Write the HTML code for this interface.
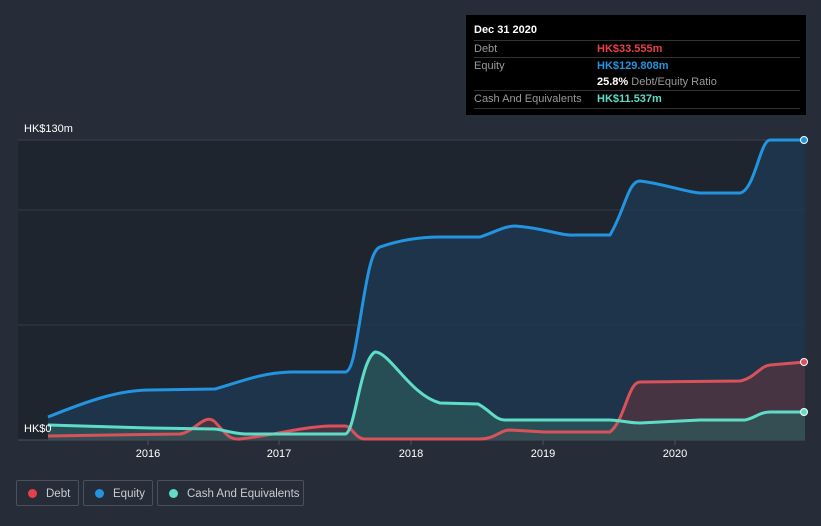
<!DOCTYPE html>
<html><head><style>
body{margin:0;width:821px;height:526px;background:#262d38;font-family:"Liberation Sans",sans-serif;overflow:hidden;position:relative}
.tt{position:absolute;left:466px;top:15px;width:340px;height:100px;background:#000;color:#fff;font-size:11px}
.row{position:absolute;left:8px;right:6px;height:17px;border-top:1px solid #333;line-height:17px;color:#999}
.lg{position:absolute;top:480px;height:26px;border:1px solid #4a515c;border-radius:2px;color:#c8ccd2;font-size:11.5px;line-height:26px;box-sizing:border-box;white-space:nowrap}
.lg i{display:inline-block;width:9px;height:9px;border-radius:50%;margin:0 9px 0 11px;vertical-align:-1px}
</style></head><body>
<svg width="821" height="526" style="position:absolute;left:0;top:0">
<rect x="18" y="140" width="787" height="300" fill="#1f252f"/>
<line x1="18" y1="140" x2="805" y2="140" stroke="#3a414c"/>
<line x1="18" y1="210" x2="805" y2="210" stroke="#333a45"/>
<line x1="18" y1="325" x2="805" y2="325" stroke="#333a45"/>
<line x1="18" y1="440" x2="805" y2="440" stroke="#4a515c"/>
<g stroke="#4a515c"><line x1="148" y1="440" x2="148" y2="445"/><line x1="279" y1="440" x2="279" y2="445"/><line x1="411" y1="440" x2="411" y2="445"/><line x1="543" y1="440" x2="543" y2="445"/><line x1="675" y1="440" x2="675" y2="445"/></g>
<path d="M48,417 C90,400 120,390 150,390 L215,389 C240,382 260,373 290,372 L345,372 C352,372 355,350 360,320 C368,270 372,250 380,247 C400,240 420,237 440,237 L480,237 C495,232 505,226 515,226 C545,228 560,236 575,235 L610,235 C625,210 628,181 640,181 C660,183 690,193 700,193 L740,193 C755,190 760,140 770,140 L805,140 L805,440 L48,440Z" fill="#1d3a55" opacity="0.75"/>
<path d="M48,436 L180,434 C195,432 205,412 215,422 C225,432 228,440 240,439 C270,436 300,427 330,426 L345,426 C352,426 355,439 365,439 L480,439 C495,439 500,430 510,430 L545,432 L610,432 C625,420 628,382 640,382 L740,381 C755,378 760,366 770,365 L805,362 L805,440 L48,440Z" fill="#5a3540" opacity="0.7"/>
<path d="M48,425 L150,428 L215,429 C225,430 230,433 245,434 L345,434 C355,434 360,360 375,352 C390,352 410,395 440,403 L478,404 C490,410 495,420 505,420 L610,420 C625,421 630,423 640,423 L700,420 L745,420 C755,418 760,412 770,412 L805,412 L805,440 L48,440Z" fill="#2d5a5a" opacity="0.7"/>
<g fill="none" stroke-width="3">
<path d="M48,417 C90,400 120,390 150,390 L215,389 C240,382 260,373 290,372 L345,372 C352,372 355,350 360,320 C368,270 372,250 380,247 C400,240 420,237 440,237 L480,237 C495,232 505,226 515,226 C545,228 560,236 575,235 L610,235 C625,210 628,181 640,181 C660,183 690,193 700,193 L740,193 C755,190 760,140 770,140 L805,140" stroke="#2394df"/>
<path d="M48,436 L180,434 C195,432 205,412 215,422 C225,432 228,440 240,439 C270,436 300,427 330,426 L345,426 C352,426 355,439 365,439 L480,439 C495,439 500,430 510,430 L545,432 L610,432 C625,420 628,382 640,382 L740,381 C755,378 760,366 770,365 L805,362" stroke="#d9515b"/>
<path d="M48,425 L150,428 L215,429 C225,430 230,433 245,434 L345,434 C355,434 360,360 375,352 C390,352 410,395 440,403 L478,404 C490,410 495,420 505,420 L610,420 C625,421 630,423 640,423 L700,420 L745,420 C755,418 760,412 770,412 L805,412" stroke="#5fdcc8"/>
</g>
<circle cx="804" cy="140" r="3.5" fill="#2394df" stroke="#fff"/>
<circle cx="804" cy="362" r="3.5" fill="#d9515b" stroke="#fff"/>
<circle cx="804" cy="412" r="3.5" fill="#5fdcc8" stroke="#fff"/>
<g fill="#fff" font-size="11" font-family="Liberation Sans"><text x="24" y="132">HK$130m</text><text x="24" y="432">HK$0</text>
<g text-anchor="middle"><text x="148" y="457">2016</text><text x="279" y="457">2017</text><text x="411" y="457">2018</text><text x="543" y="457">2019</text><text x="675" y="457">2020</text></g></g>
</svg>
<div class="tt">
<div style="position:absolute;left:8px;top:9px;font-weight:bold">Dec 31 2020</div>
<div class="row" style="top:25px">Debt<span style="position:absolute;left:123px;color:#e5414a;font-weight:bold">HK$33.555m</span></div>
<div class="row" style="top:42px">Equity<span style="position:absolute;left:123px;color:#2394df;font-weight:bold">HK$129.808m</span></div>
<div class="row" style="top:59px;border:0"><span style="position:absolute;left:123px"><b style="color:#fff">25.8%</b> Debt/Equity Ratio</span></div>
<div class="row" style="top:75px;border-bottom:1px solid #333">Cash And Equivalents<span style="position:absolute;left:123px;color:#5fdcc8;font-weight:bold">HK$11.537m</span></div>
</div>
<div class="lg" style="left:16px;width:63px"><i style="background:#e5414a"></i>Debt</div>
<div class="lg" style="left:83px;width:70px"><i style="background:#2394df"></i>Equity</div>
<div class="lg" style="left:157px;width:147px"><i style="background:#5fdcc8"></i>Cash And Equivalents</div>
</body></html>
